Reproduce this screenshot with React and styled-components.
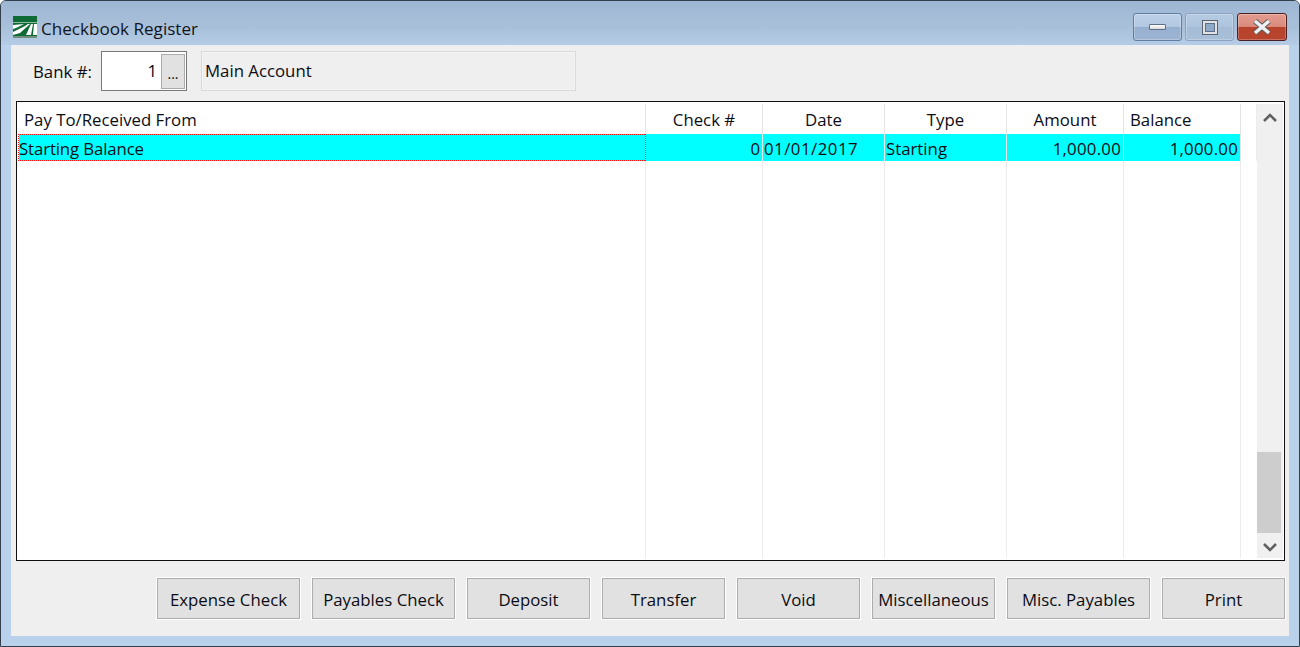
import React from 'react'
import styled, { createGlobalStyle } from 'styled-components'

const columns = [
  { key: 'payee', title: 'Pay To/Received From', headAlign: 'left', align: 'left', value: 'Starting Balance', spacing: -0.12 },
  { key: 'check', title: 'Check #', headAlign: 'center', align: 'right', value: '0', spacing: 0 },
  { key: 'date', title: 'Date', headAlign: 'center', align: 'left', value: '01/01/2017', spacing: 0.5 },
  { key: 'type', title: 'Type', headAlign: 'center', align: 'left', value: 'Starting', spacing: 0 },
  { key: 'amount', title: 'Amount', headAlign: 'center', align: 'right', value: '1,000.00', spacing: 0.25 },
  { key: 'balance', title: 'Balance', headAlign: 'left', align: 'right', value: '1,000.00', spacing: 0.25 },
]

const buttons = [
  ['Expense Check', 143],
  ['Payables Check', 143],
  ['Deposit', 123],
  ['Transfer', 123],
  ['Void', 123],
  ['Miscellaneous', 123],
  ['Misc. Payables', 143],
  ['Print', 123],
]

const GlobalStyle = createGlobalStyle`
  html, body {
    margin: 0;
    padding: 0;
    background: #fff;
  }
  body {
    font-family: "Open Sans", "Noto Sans", sans-serif;
    color: #0c0c14;
  }
`

const Window = styled.div`
  width: 1300px;
  height: 647px;
  box-sizing: border-box;
  border: 1px solid #33404c;
  border-radius: 6px 6px 0 0;
  background: #b9d1ea;
  display: flex;
  flex-direction: column;
  overflow: hidden;
`

const TitleBar = styled.div`
  height: 44px;
  flex: none;
  box-sizing: border-box;
  padding: 12px 12px 3px 12px;
  display: flex;
  align-items: flex-start;
  background: linear-gradient(to bottom, #9db6d3, #a9c0da 60%, #b4cce6);
`

const TitleIcon = styled.svg`
  width: 24px;
  height: 22px;
  margin-top: 3px;
  flex: none;
`

const Title = styled.div`
  margin-left: 4px;
  margin-top: 2px;
  font-size: 17.1px;
  line-height: 28px;
  color: #10151c;
`

const Controls = styled.div`
  margin-left: auto;
  display: flex;
  gap: 3px;
`

const Control = styled.div`
  width: ${p => p.$close ? 50 : 49}px;
  height: 28px;
  box-sizing: border-box;
  border-radius: 3px;
  border: 1px solid ${p => p.$close ? '#4a1f22' : p.$muted ? '#8ba3c0' : '#5f7ea3'};
  background: ${p => p.$close
    ? 'linear-gradient(to bottom, #e39c8f, #d98b7c 48%, #b8432c 50%, #b9442e)'
    : p.$muted
      ? 'linear-gradient(to bottom, #b5cae2, #aec4de 48%, #a5bcd7 50%, #a8bfda)'
      : 'linear-gradient(to bottom, #bdd0e8, #b3c8e2 48%, #98b0cf 50%, #9db5d3)'};
  box-shadow: inset 0 0 0 1px rgba(255, 255, 255, 0.25);
  display: flex;
  align-items: center;
  justify-content: center;
`

const MinGlyph = styled.div`
  width: 17px;
  height: 6px;
  box-sizing: border-box;
  background: linear-gradient(to bottom, #ffffff, #d8d8d8);
  border: 1px solid #5d6f86;
  border-radius: 1px;
`

const MaxGlyph = styled.div`
  width: 16px;
  height: 15px;
  box-sizing: border-box;
  border: 1px solid #5d6470;
  box-shadow: inset 0 0 0 2px #e0e2e6, inset 0 0 0 3px #5d6f86;
  background: #8ea8c8;
`

const Panel = styled.div`
  flex: 1;
  margin: 0 10px 10px 10px;
  background: #efefef;
  display: flex;
  flex-direction: column;
  padding: 6px 4px 17px 5px;
  min-height: 0;
`

const BankRow = styled.div`
  display: flex;
  align-items: flex-start;
  height: 40px;
  flex: none;
`

const BankLabel = styled.label`
  margin-left: 17px;
  width: 68px;
  font-size: 16.8px;
  line-height: 41px;
`

const BankInput = styled.div`
  width: 86px;
  height: 40px;
  box-sizing: border-box;
  border: 1px solid #7a7a7a;
  background: #fff;
  display: flex;
  align-items: stretch;
  padding: 2px 1px 1px 0;
`

const BankNumber = styled.div`
  flex: 1;
  text-align: right;
  font-size: 16.8px;
  line-height: 34px;
  padding-right: 4px;
`

const LookupButton = styled.div`
  width: 24px;
  box-sizing: border-box;
  border: 1px solid #ababab;
  background: #e1e1e1;
  font-size: 14px;
  line-height: 38px;
  text-align: center;
`

const BankName = styled.div`
  margin-left: 14px;
  width: 375px;
  height: 40px;
  box-sizing: border-box;
  border: 1px solid #d9d9d9;
  box-shadow: inset 0 0 0 1px #f4f4f4;
  padding-left: 3px;
  font-size: 16.8px;
  line-height: 38px;
`

const Register = styled.div`
  margin-top: 10px;
  flex: 1;
  min-height: 0;
  box-sizing: border-box;
  border: 1px solid #101010;
  background: #fff;
  display: flex;
  padding: 2px 1px 2px 2px;
`

const Grid = styled.div`
  flex: 1;
  display: grid;
  grid-template-columns: 627px 117px 122px 122px 117px 117px 1fr;
  grid-template-rows: 30px 27px 1fr;
  font-size: 16.8px;
`

const HeadCell = styled.div`
  border-right: 1px solid #e4e4e4;
  text-align: ${p => p.$align};
  padding: 0 ${p => p.$first ? 5 : 6}px;
  line-height: 31px;
  white-space: nowrap;
`

const RowCell = styled.div`
  position: relative;
  background: #00ffff;
  border-right: 1px solid #e4e4e4;
  text-align: ${p => p.$align};
  padding: 0 2px 0 ${p => p.$focused ? 0 : 1}px;
  line-height: 29px;
  letter-spacing: ${p => p.$spacing}px;
  white-space: nowrap;
`

const FocusMark = styled.span`
  position: absolute;
  top: 0;
  bottom: 0;
  left: -1px;
  right: -1px;
  --dots-x: repeating-linear-gradient(90deg, #ff1010 0 1px, transparent 1px 2px);
  --dots-y: repeating-linear-gradient(0deg, #ff1010 0 1px, transparent 1px 2px);
  background:
    var(--dots-x) top / 100% 1px no-repeat,
    var(--dots-x) bottom / 100% 1px no-repeat,
    var(--dots-y) left / 1px 100% no-repeat,
    var(--dots-y) right / 1px 100% no-repeat;
`

const Cell = styled.div`
  border-right: 1px solid #ececec;
`

const Scrollbar = styled.div`
  width: 26px;
  flex: none;
  background: #f0f0f0;
  display: flex;
  flex-direction: column;
  align-items: stretch;
`

const ScrollArrow = styled.div`
  height: ${p => p.$short ? 25 : 27}px;
  box-sizing: border-box;
  padding-top: ${p => p.$short ? 2 : 0}px;
  flex: none;
  display: flex;
  align-items: center;
  justify-content: center;
  color: #606060;
`

const ScrollTrack = styled.div`
  flex: 1;
  display: flex;
  flex-direction: column;
  justify-content: flex-end;
`

const ScrollThumb = styled.div`
  height: 81px;
  width: 24px;
  background: #cdcdcd;
`

const ButtonRow = styled.div`
  margin-top: 17px;
  flex: none;
  display: flex;
  justify-content: flex-end;
  gap: 12px;
`

const ActionButton = styled.button`
  width: ${p => p.$width}px;
  height: 41px;
  box-sizing: border-box;
  border: 1px solid #adadad;
  outline: 1px solid #fff;
  outline-offset: 0;
  background: #e1e1e1;
  font: inherit;
  font-size: 16.8px;
  color: inherit;
  padding: 2px 0 0;
  white-space: nowrap;
`

const Chevron = ({ up }) => (
  <svg width="14" height="10" viewBox="0 0 14 10">
    <path d={up ? 'M1 8 L7 2 L13 8' : 'M1 2 L7 8 L13 2'} fill="none" stroke="currentColor" strokeWidth="2.6" />
  </svg>
)

const AppIcon = () => (
  <TitleIcon viewBox="0 0 24 22">
    <rect width="24" height="22" fill="#0f6b35" />
    <rect y="6" width="24" height="1" fill="#8fb89c" />
    <rect y="20" width="24" height="2" fill="#6f8f78" />
    <path d="M0 9 L11 8 L3 12 L0 13Z M0 16 L12 10 L15 8 L17 8 L7 17 L0 19Z M13 19 L18 8 L20 8 L18 19Z M20 19 L21 8 L24 8 L24 19Z" fill="#fff" />
  </TitleIcon>
)

const CloseGlyph = () => (
  <svg width="20" height="16" viewBox="0 0 20 16">
    <path d="M3 2 L17 14 M17 2 L3 14" stroke="#5a5a5a" strokeWidth="5.4" />
    <path d="M3 2 L17 14 M17 2 L3 14" stroke="#eef0f2" strokeWidth="3.6" />
  </svg>
)

const App = () => {
  return (
    <>
      <GlobalStyle />
      <Window>
        <TitleBar>
          <AppIcon />
          <Title>Checkbook Register</Title>
          <Controls>
            <Control><MinGlyph /></Control>
            <Control $muted><MaxGlyph /></Control>
            <Control $close><CloseGlyph /></Control>
          </Controls>
        </TitleBar>
        <Panel>
          <BankRow>
            <BankLabel>Bank #:</BankLabel>
            <BankInput>
              <BankNumber>1</BankNumber>
              <LookupButton>...</LookupButton>
            </BankInput>
            <BankName>Main Account</BankName>
          </BankRow>
          <Register>
            <Grid>
              {columns.map((c, i) => (
                <HeadCell key={c.key} $align={c.headAlign} $first={i === 0}>{c.title}</HeadCell>
              ))}
              <Cell />
              {columns.map((c, i) => (
                <RowCell key={c.key} $align={c.align} $focused={i === 0} $spacing={c.spacing}>
                  {c.value}
                  {i === 0 && <FocusMark />}
                </RowCell>
              ))}
              <Cell />
              {columns.map(c => <Cell key={c.key} />)}
              <div />
            </Grid>
            <Scrollbar>
              <ScrollArrow><Chevron up /></ScrollArrow>
              <ScrollTrack><ScrollThumb /></ScrollTrack>
              <ScrollArrow $short><Chevron /></ScrollArrow>
            </Scrollbar>
          </Register>
          <ButtonRow>
            {buttons.map(([label, width]) => (
              <ActionButton key={label} $width={width}>{label}</ActionButton>
            ))}
          </ButtonRow>
        </Panel>
      </Window>
    </>
  )
}

export default App
